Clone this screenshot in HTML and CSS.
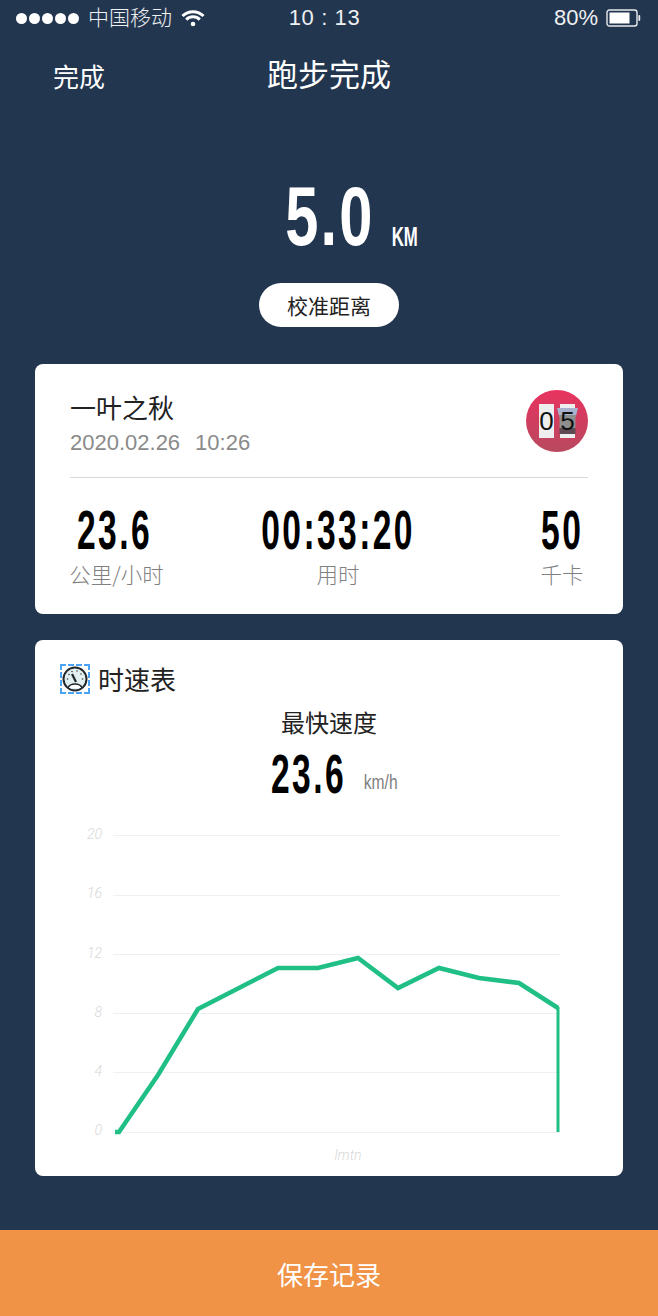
FILE: index.html
```html
<!DOCTYPE html>
<html lang="zh">
<head>
<meta charset="utf-8">
<title>跑步完成</title>
<link rel="stylesheet" href="styles.css">
</head>
<body>
<div class="page">
  <div class="status">
    <div class="status-left">
      <span class="dots"><i></i><i></i><i></i><i></i><i></i></span>
      <span class="carrier">中国移动</span>
      <svg class="wifi" width="24" height="18" viewBox="0 0 24 18"><path d="M1.500 7a15 15 0 0 1 21 0M5.200 10.600a9.800 9.800 0 0 1 13.600 0" fill="none" stroke="#fff" stroke-width="3"/><circle cx="12" cy="15" r="2.300" fill="#fff"/></svg>
    </div>
    <div class="status-time">10 : 13</div>
    <div class="status-right">
      <span>80%</span>
      <svg width="35" height="18" viewBox="0 0 35 18"><rect x="1" y="1" width="30" height="16" rx="2.500" fill="none" stroke="#e8eaed" stroke-width="1.400"/><rect x="3.500" y="3.500" width="20" height="11" fill="#fff"/><rect x="32.400" y="6" width="1.800" height="6" rx="0.800" fill="#e8eaed"/></svg>
    </div>
  </div>
  <div class="nav">
    <span class="nav-back">完成</span>
    <span class="nav-title">跑步完成</span>
  </div>
  <div class="distance">
    <span class="distance-num cond">5.0</span>
    <span class="distance-unit cond">KM</span>
  </div>
  <div class="calibrate-row"><span class="calibrate">校准距离</span></div>

  <section class="card card-run">
    <div class="user">
      <div class="user-text">
        <div class="user-name">一叶之秋</div>
        <div class="user-date"><span>2020.02.26</span><span class="user-time">10:26</span></div>
      </div>
      <div class="badge">
        <span class="flip">0</span>
        <span class="flip flip-turn"><b class="flip-digit">5</b></span>
      </div>
    </div>
    <div class="stats">
      <div class="stat stat-a"><span class="stat-num stat-num-a cond">23.6</span><span class="stat-label">公里/小时</span></div>
      <div class="stat stat-b"><span class="stat-num cond">00:33:20</span><span class="stat-label">用时</span></div>
      <div class="stat stat-c"><span class="stat-num cond">50</span><span class="stat-label">千卡</span></div>
    </div>
  </section>

  <section class="card card-speed">
    <div class="speed-head">
      <span class="gauge">
        <svg width="28" height="28" viewBox="0 0 28 28">
          <circle cx="14" cy="14" r="11.500" fill="#e3f0f2" stroke="#22272c" stroke-width="2"/>
          <path d="M7 23c1-3 3.500-4 7-4s6 1 7 4" fill="#fff" stroke="#22272c" stroke-width="1.500"/>
          <path d="M11 9l4 8" stroke="#22272c" stroke-width="2.200"/>
          <g fill="#444"><circle cx="6.500" cy="14" r=".8"/><circle cx="8" cy="9.500" r=".8"/><circle cx="11" cy="6.500" r=".8"/><circle cx="16" cy="6" r=".8"/><circle cx="20" cy="9" r=".8"/><circle cx="21.500" cy="14" r=".8"/></g>
        </svg>
      </span>
      <span class="speed-title">时速表</span>
    </div>
    <div class="fast-label">最快速度</div>
    <div class="fast-value"><span class="fast-num cond">23.6</span><span class="fast-unit cond">km/h</span></div>
    <svg class="chart" width="588" height="343" viewBox="35 826 588 343">
      <g stroke="#f0f0f1" stroke-width="1">
        <line x1="113" y1="835.500" x2="560" y2="835.500"/>
        <line x1="113" y1="895.500" x2="560" y2="895.500"/>
        <line x1="113" y1="954.500" x2="560" y2="954.500"/>
        <line x1="113" y1="1013.500" x2="560" y2="1013.500"/>
        <line x1="113" y1="1072.500" x2="560" y2="1072.500"/>
        <line x1="113" y1="1132.500" x2="560" y2="1132.500"/>
      </g>
      <g class="axis" text-anchor="end">
        <text x="102" y="839">20</text>
        <text x="102" y="898">16</text>
        <text x="102" y="958">12</text>
        <text x="102" y="1017">8</text>
        <text x="102" y="1076">4</text>
        <text x="102" y="1135">0</text>
      </g>
      <text class="axis" x="348" y="1160" text-anchor="middle">lmtn</text>
      <polyline fill="none" stroke="#1fbf85" stroke-width="4.500" stroke-linejoin="miter" points="115,1132 119,1132 158,1075 198,1009 278,968 318,968 358,958 398,988 439,968 479,978 519,983 558,1008"/>
      <line x1="558" y1="1007" x2="558" y2="1132" stroke="#1fbf85" stroke-width="3"/>
    </svg>
  </section>

  <button class="save">保存记录</button>
</div>
</body>
</html>
```
FILE: styles.css
```css
* { box-sizing: border-box; }
html, body { margin: 0; padding: 0; }
body {
  width: 658px;
  height: 1316px;
  overflow: hidden;
  font-family: "Noto Sans CJK SC", "Liberation Sans", sans-serif;
  background: #22364f;
}
.page {
  height: 1316px;
  display: flex;
  flex-direction: column;
  color: #fff;
}
.cond {
  font-family: "Liberation Sans", Arial, sans-serif;
  font-weight: 700;
  display: inline-block;
  transform-origin: center;
}
.status {
  height: 36px;
  display: grid;
  grid-template-columns: 1fr auto 1fr;
  align-items: center;
  padding: 0 17px 0 16px;
  font-family: "Liberation Sans", "Noto Sans CJK SC", sans-serif;
  font-size: 22px;
  color: #eef0f2;
}
.status-left { display: flex; align-items: center; gap: 9px; }
.dots { display: flex; gap: 2px; }
.dots i { width: 11px; height: 11px; border-radius: 50%; background: #fff; }
.carrier { font-size: 21px; line-height: 30px; padding-bottom: 4px; font-family: "Noto Sans CJK SC", sans-serif; font-weight: 300; }
.status-time { font-size: 22px; letter-spacing: 0.6px; padding-right: 8px; }
.status-right { display: flex; align-items: center; justify-content: flex-end; gap: 8px; }
.nav {
  position: relative;
  height: 72px;
  display: flex;
  justify-content: center;
  align-items: center;
  padding-top: 2px;
}
.nav-back {
  position: absolute;
  left: 53px;
  top: 22px;
  font-size: 26px;
  line-height: 36px;
  font-weight: 400;
}
.nav-title { font-size: 31px; line-height: 40px; }
.distance {
  height: 103px;
  margin-top: 47px;
  display: flex;
  justify-content: center;
  align-items: flex-end;
  padding-left: 58px;
}
.distance-num {
  font-size: 84px;
  line-height: 84px;
  letter-spacing: 3px;
  transform: scaleX(0.71);
  margin: 0 -10px 0 -22px;
}
.distance-unit {
  font-size: 28px;
  line-height: 28px;
  transform: scaleX(0.6);
  margin-bottom: 7px;
}
.calibrate-row { display: flex; justify-content: center; margin-top: 25px; height: 44px; }
.calibrate {
  width: 140px;
  height: 44px;
  border-radius: 22px;
  background: #fff;
  color: #222;
  font-size: 21px;
  line-height: 44px;
  text-align: center;
}
.card {
  width: 588px;
  margin-left: 35px;
  background: #fff;
  border-radius: 8px;
  color: #000;
}
.card-run { height: 250px; margin-top: 37px; padding: 24px 35px 0; }
.user {
  display: flex;
  justify-content: space-between;
  height: 90px;
  border-bottom: 1px solid #d9d9d9;
}
.user-name { font-size: 26px; line-height: 38px; color: #222; }
.user-date {
  font-family: "Liberation Sans", sans-serif;
  font-size: 22px;
  line-height: 26px;
  margin-top: 4px;
  color: #8a8a8a;
}
.user-time { margin-left: 15px; }
.badge {
  width: 62px;
  height: 62px;
  margin-top: 2px;
  border-radius: 50%;
  background: linear-gradient(#e8335f, #b8495f);
  display: flex;
  justify-content: center;
  align-items: center;
  gap: 6px;
}
.flip {
  width: 15px;
  height: 34px;
  background: #eee;
  color: #111;
  font-family: "Liberation Sans", sans-serif;
  font-size: 26px;
  line-height: 34px;
  text-align: center;
}
.flip-turn { position: relative; }
.flip-turn::before {
  content: "";
  position: absolute;
  left: -3px;
  right: -3px;
  top: 4px;
  bottom: 4px;
  background: linear-gradient(#a8b2cc 0 26%, #8f8f8f 26% 78%, #5d4a52 78%);
  clip-path: polygon(0 0, 100% 0, 88% 38%, 88% 100%, 12% 100%, 12% 38%);
}
.flip-digit { position: relative; font-weight: 400; }
.stats {
  position: relative;
  height: 130px;
}
.stat { position: absolute; top: 23px; display: flex; flex-direction: column; align-items: center; }
.stat-a { left: 0; width: 93px; }
.stat-b { left: 183px; width: 170px; }
.stat-c { right: 6px; width: 40px; }
.stat-num {
  font-size: 56px;
  line-height: 58px;
  letter-spacing: 4px;
  white-space: nowrap;
  transform: scaleX(0.6);
}
.stat-num-a { margin-right: 4px; }
.stat-label {
  font-size: 21.500px;
  font-weight: 300;
  line-height: 30px;
  color: #808080;
  white-space: nowrap;
}
.card-speed { height: 536px; margin-top: 26px; padding-top: 21px; }
.speed-head { display: flex; align-items: center; padding-left: 25px; height: 36px; gap: 8px; }
.gauge {
  width: 30px;
  height: 30px;
  display: flex;
  align-items: center;
  justify-content: center;
  outline: 2px dashed #4aa3f5;
  outline-offset: -2px;
}
.speed-title { font-size: 26px; line-height: 36px; color: #222; }
.fast-label { text-align: center; font-size: 24px; line-height: 34px; color: #222; margin-top: 8px; }
.fast-value { display: flex; justify-content: center; align-items: flex-start; height: 66px; padding: 6px 0 0 6px; }
.fast-num {
  font-size: 56px;
  line-height: 58px;
  letter-spacing: 4px;
  transform: scaleX(0.6);
  margin-right: -16px;
  margin-left: -16px;
}
.fast-unit {
  font-size: 20px;
  line-height: 24px;
  font-weight: 400;
  color: #808080;
  transform: scaleX(0.78);
  margin: 25px 0 0 4px;
}
.chart { display: block; margin-top: 21px; }
.axis {
  font-family: Roboto, sans-serif;
  font-size: 14px;
  font-style: italic;
  font-weight: 300;
  fill: #d8d8d8;
}
.save {
  margin-top: auto;
  height: 86px;
  border: 0;
  background: #f09346;
  color: #fff;
  font-family: "Noto Sans CJK SC", sans-serif;
  font-size: 26px;
  padding: 0;
}
```
